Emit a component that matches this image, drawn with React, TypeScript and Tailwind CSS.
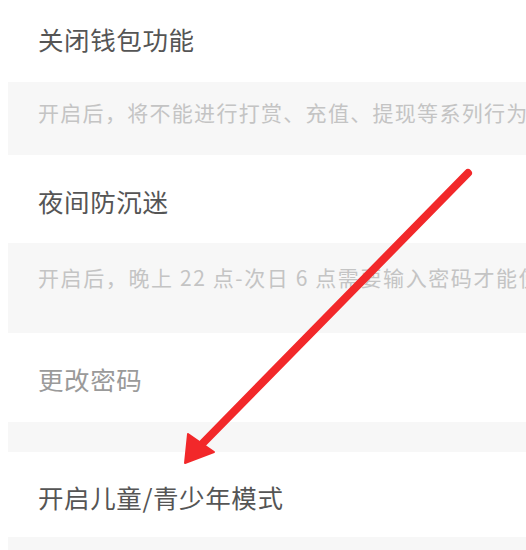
import React from 'react';

const FONT = '"Noto Sans CJK SC", "Noto Sans", sans-serif';

function TitleRow({ text, className, muted }: { text: string; className: string; muted?: boolean }) {
  return (
    <div className={`flex items-center bg-white pl-[38px] ${className}`}>
      <span className={`text-[25.5px] leading-none tracking-[0.6px] ${muted ? 'text-[#9a9a9a]' : 'text-[#555555]'}`}>
        {text}
      </span>
    </div>
  );
}

function NoteBand({ text, className, spacing }: { text: string; className: string; spacing: string }) {
  return (
    <div className={`ml-2 overflow-hidden whitespace-pre bg-[#f7f7f7] pl-[30px] ${className}`}>
      <span className={`text-[21px] leading-none text-[#c4c4c4] ${spacing}`}>{text}</span>
    </div>
  );
}

export default function App() {
  return (
    <div className="relative h-[550px] w-[526px] overflow-hidden bg-white" style={{ fontFamily: FONT }}>
      <TitleRow text="关闭钱包功能" className="h-[82px] pb-[5px]" />
      <NoteBand
        text="开启后，将不能进行打赏、充值、提现等系列行为"
        spacing="tracking-[1.3px]"
        className="h-[73px] pt-[20px]"
      />
      <TitleRow text="夜间防沉迷" className="h-[88px] pt-[4px]" />
      <NoteBand
        text="开启后，晚上 22 点-次日 6 点需要输入密码才能使用"
        spacing="tracking-[1.6px]"
        className="h-[90px] pt-[24px]"
      />
      <TitleRow text="更改密码" className="h-[89px] pt-[2px]" muted />
      <div className="ml-2 h-[30px] bg-[#f7f7f7]" />
      <TitleRow text="开启儿童/青少年模式" className="h-[85px] pt-[4px]" />
      <div className="ml-2 h-[13px] bg-[#f7f7f7]" />

      {/* red annotation arrow */}
      <svg className="pointer-events-none absolute left-0 top-0" width="526" height="550" viewBox="0 0 526 550">
        <line x1="468" y1="173" x2="203" y2="443" stroke="#f2282a" strokeWidth="8" strokeLinecap="round" />
        <polygon points="185,463 188,434 214,452" fill="#f2282a" stroke="#f2282a" strokeWidth="2" strokeLinejoin="round" />
      </svg>
    </div>
  );
}
